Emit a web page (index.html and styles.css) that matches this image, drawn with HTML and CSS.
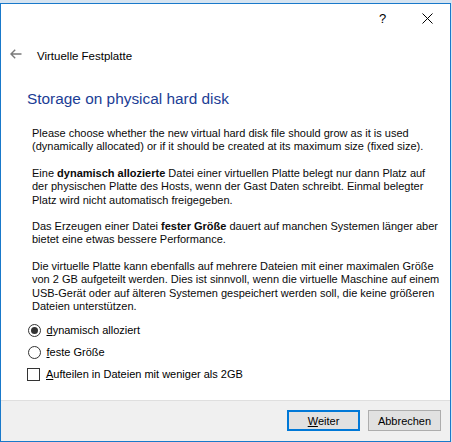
FILE: index.html
```html
<!DOCTYPE html>
<html lang="de">
<head>
<meta charset="utf-8">
<title>Virtuelle Festplatte</title>
<link rel="stylesheet" href="styles.css">
</head>
<body>
<div class="window">
  <div class="titlebar">
    <div class="tb-btn help">?</div>
    <div class="tb-btn close">
      <svg width="11" height="11" viewBox="0 0 11 11"><path d="M0.5 0.5 L10.5 10.5 M10.5 0.5 L0.5 10.5" stroke="#000" stroke-width="1" fill="none"/></svg>
    </div>
  </div>
  <div class="header">
    <div class="back">
      <svg width="12" height="10" viewBox="0 0 12 10"><path d="M1 5 H11.5 M5.2 0.8 L1 5 L5.2 9.2" stroke="#7a7a7a" stroke-width="1.4" fill="none"/></svg>
    </div>
    <div class="header-title">Virtuelle Festplatte</div>
  </div>
  <div class="content">
    <h1 class="page-title">Storage on physical hard disk</h1>
    <p class="para">Please choose whether the new virtual hard disk file should grow as it is used<br>(dynamically allocated) or if it should be created at its maximum size (fixed size).</p>
    <p class="para">Eine <b>dynamisch allozierte</b> Datei einer virtuellen Platte belegt nur dann Platz auf<br>der physischen Platte des Hosts, wenn der Gast Daten schreibt. Einmal belegter<br>Platz wird nicht automatisch freigegeben.</p>
    <p class="para">Das Erzeugen einer Datei <b>fester Größe</b> dauert auf manchen Systemen länger aber<br>bietet eine etwas bessere Performance.</p>
    <p class="para">Die virtuelle Platte kann ebenfalls auf mehrere Dateien mit einer maximalen Größe<br>von 2 GB aufgeteilt werden. Dies ist sinnvoll, wenn die virtuelle Maschine auf einem<br>USB-Gerät oder auf älteren Systemen gespeichert werden soll, die keine größeren<br>Dateien unterstützen.</p>
    <div class="options">
      <div class="opt">
        <svg class="radio" width="13" height="13" viewBox="0 0 13 13"><circle cx="6.5" cy="6.5" r="6" fill="#fff" stroke="#333" stroke-width="1"/><circle cx="6.5" cy="6.5" r="3.5" fill="#333"/></svg>
        <span class="opt-label"><u>d</u>ynamisch alloziert</span>
      </div>
      <div class="opt">
        <svg class="radio" width="13" height="13" viewBox="0 0 13 13"><circle cx="6.5" cy="6.5" r="6" fill="#fff" stroke="#333" stroke-width="1"/></svg>
        <span class="opt-label"><u>f</u>este Größe</span>
      </div>
      <div class="opt opt-check">
        <span class="checkbox"></span>
        <span class="opt-label"><u>A</u>ufteilen in Dateien mit weniger als 2GB</span>
      </div>
    </div>
  </div>
  <div class="footer">
    <button class="btn btn-default"><u>W</u>eiter</button>
    <button class="btn">Abbrechen</button>
  </div>
</div>
</body>
</html>
```
FILE: styles.css
```css
html, body {
  margin: 0;
  padding: 0;
}
body {
  background: #d6e4f1;
  font-family: "Liberation Sans", Arial, sans-serif;
  color: #000;
  width: 452px;
  height: 442px;
  overflow: hidden;
}
.window {
  margin-top: 3px;
  width: 451px;
  height: 439px;
  box-sizing: border-box;
  border: 1px solid #1979ca;
  background: #fff;
  display: flex;
  flex-direction: column;
}
.titlebar {
  height: 28px;
  display: flex;
  justify-content: flex-end;
}
.tb-btn {
  width: 45px;
  height: 28px;
  display: flex;
  align-items: center;
  justify-content: center;
}
.help {
  font-size: 13px;
  padding-top: 1px;
  box-sizing: border-box;
}
.close svg {
  display: block;
}
.header {
  margin-top: 12px;
  height: 24px;
  display: flex;
  align-items: center;
}
.back {
  width: 36px;
  padding-left: 9px;
  box-sizing: border-box;
  height: 24px;
  display: flex;
  align-items: center;
  margin-top: -5px;
}
.back svg {
  display: block;
}
.header-title {
  font-size: 11.5px;
}
.content {
  flex: 1;
  padding-left: 31px;
}
.page-title {
  margin: 21px 0 0 -5px;
  font-weight: normal;
  font-size: 15.4px;
  line-height: 20px;
  color: #1b3d95;
}
.para {
  margin: 13px 0 0 0;
  font-size: 11px;
  line-height: 13.4px;
  color: #0a0a0a;
}
.page-title + .para {
  margin-top: 18px;
}
.para b {
  font-weight: bold;
}
.options {
  margin-top: 9px;
  margin-left: -4.5px;
}
.opt {
  height: 16px;
  display: flex;
  align-items: center;
  font-size: 11px;
  margin-bottom: 6px;
}
.opt-check {
  margin-top: 2.5px;
}
.radio {
  display: block;
  flex: none;
}
.checkbox {
  width: 13px;
  height: 13px;
  box-sizing: border-box;
  border: 1px solid #333;
  background: #fff;
  flex: none;
  margin-left: -0.5px;
}
.opt-label {
  margin-left: 6px;
}
.footer {
  height: 41px;
  box-sizing: border-box;
  border-top: 1px solid #dfdfdf;
  background: #f0f0f0;
  display: flex;
  justify-content: flex-end;
  align-items: flex-start;
  gap: 8px;
  padding: 9px 9px 0 0;
}
.btn {
  width: 73px;
  height: 21px;
  box-sizing: border-box;
  border: 1px solid #adadad;
  background: #e1e1e1;
  font-family: "Liberation Sans", Arial, sans-serif;
  font-size: 11px;
  color: #000;
  padding: 0;
  margin: 0;
}
.btn-default {
  border: 1px solid #0078d7;
  box-shadow: inset 0 0 0 1px #0078d7;
}
```
